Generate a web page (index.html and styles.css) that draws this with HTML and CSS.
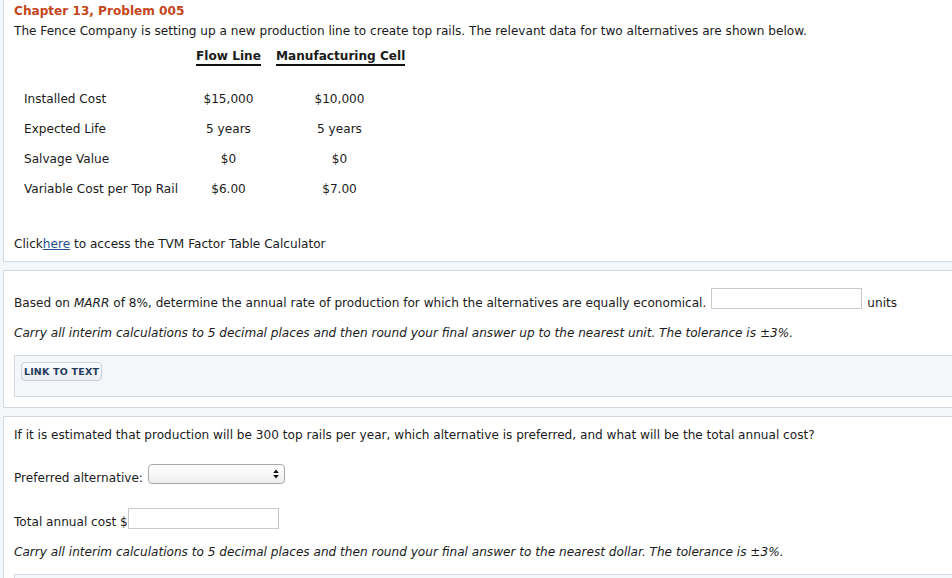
FILE: index.html
```html
<!DOCTYPE html>
<html>
<head>
<meta charset="utf-8">
<link rel="stylesheet" href="styles.css">
</head>
<body>
<div class="page">
  <section class="panel panel-intro">
    <h1 class="title">Chapter 13, Problem 005</h1>
    <p class="line intro">The Fence Company is setting up a new production line to create top rails. The relevant data for two alternatives are shown below.</p>
    <div class="data">
      <div class="row head">
        <div class="label"></div>
        <div class="cell"><span class="hd">Flow Line</span></div>
        <div class="cell"><span class="hd">Manufacturing Cell</span></div>
      </div>
      <div class="row">
        <div class="label">Installed Cost</div>
        <div class="cell">$15,000</div>
        <div class="cell">$10,000</div>
      </div>
      <div class="row">
        <div class="label">Expected Life</div>
        <div class="cell">5 years</div>
        <div class="cell">5 years</div>
      </div>
      <div class="row">
        <div class="label">Salvage Value</div>
        <div class="cell">$0</div>
        <div class="cell">$0</div>
      </div>
      <div class="row">
        <div class="label">Variable Cost per Top Rail</div>
        <div class="cell">$6.00</div>
        <div class="cell">$7.00</div>
      </div>
    </div>
    <p class="line click">Click<a href="#" class="link">here</a> to access the TVM Factor Table Calculator</p>
  </section>

  <section class="panel panel-q1">
    <div class="field-row first">
      <span class="field-text">Based on <i>MARR</i> of 8%, determine the annual rate of production for which the alternatives are equally economical.</span>
      <span class="input input-units"></span>
      <span class="field-text units">units</span>
    </div>
    <p class="line note note1">Carry all interim calculations to 5 decimal places and then round your final answer up to the nearest unit. The tolerance is ±3%.</p>
    <div class="toolbox">
      <span class="btn">LINK TO TEXT</span>
    </div>
  </section>

  <section class="panel panel-q2">
    <p class="line q2">If it is estimated that production will be 300 top rails per year, which alternative is preferred, and what will be the total annual cost?</p>
    <div class="field-row pref">
      <span class="field-text">Preferred alternative:</span>
      <span class="select">
        <svg class="arrows" width="6" height="10" viewBox="0 0 6 10"><path d="M3 0.5 L5.8 4 L0.2 4 Z M3 9.5 L5.8 6 L0.2 6 Z" fill="#111"/></svg>
      </span>
    </div>
    <div class="field-row total">
      <span class="field-text">Total annual cost $</span>
      <span class="input input-cost"></span>
    </div>
    <p class="line note note2">Carry all interim calculations to 5 decimal places and then round your final answer to the nearest dollar. The tolerance is ±3%.</p>
    <div class="toolbox"></div>
  </section>
</div>
</body>
</html>
```

FILE: styles.css
```css
html, body {
  margin: 0;
  padding: 0;
  overflow: hidden;
}
body {
  background: #f4f7fa;
  font-family: "DejaVu Sans", Verdana, sans-serif;
  font-size: 12.1px;
  color: #1b1b1b;
  width: 952px;
  height: 578px;
}
.page {
  padding-left: 3px;
  display: flex;
  flex-direction: column;
  gap: 8px;
}
.panel {
  background: #fff;
  border-left: 1px solid #d3d9e3;
  border-bottom: 1px solid #d3d9e3;
  padding-left: 10px;
}
.panel-q1, .panel-q2 {
  border-top: 1px solid #d3d9e3;
}
.line {
  margin: 0;
  line-height: 16px;
}
.title {
  margin: 0;
  padding-top: 3px;
  font-size: 12.1px;
  line-height: 16px;
  font-weight: bold;
  color: #c4461c;
}
.intro {
  margin-top: 4px;
}
.data {
  margin-top: 9px;
}
.row {
  display: grid;
  grid-template-columns: 157px 65px 127px;
  column-gap: 15px;
  padding-left: 10px;
  line-height: 16px;
  padding-top: 7px;
  padding-bottom: 7px;
}
.row.head {
  padding-top: 0;
  padding-bottom: 0;
  margin-bottom: 18px;
  font-weight: bold;
}
.hd {
  display: inline-block;
  border-bottom: 2px solid #111;
  white-space: nowrap;
}
.cell {
  text-align: center;
  white-space: nowrap;
}
.label {
  white-space: nowrap;
}
.click {
  margin-top: 32px;
  padding-bottom: 9px;
}
.link {
  color: #24508c;
  text-decoration: underline;
}
.field-row {
  display: flex;
  align-items: flex-start;
  height: 21px;
}
.field-text {
  line-height: 16px;
  margin-top: 7px;
  white-space: nowrap;
}
.first {
  margin-top: 17px;
}
.input {
  display: block;
  box-sizing: border-box;
  width: 151px;
  height: 21px;
  border: 1px solid #c9c9c9;
  background: #fff;
}
.input-units {
  margin-left: 5px;
}
.units {
  margin-left: 5px;
}
.note {
  font-style: italic;
}
.note1 {
  margin-top: 16px;
}
.note2 {
  margin-top: 15px;
}
.toolbox {
  margin-top: 14px;
  background: #f4f7fa;
  border: 1px solid #d3d9e3;
  border-right: none;
  padding: 6px 0 0 6px;
  box-sizing: border-box;
  height: 42px;
}
.panel-q1 .toolbox {
  margin-bottom: 10px;
}
.btn {
  display: inline-flex;
  align-items: center;
  justify-content: center;
  box-sizing: border-box;
  width: 81px;
  height: 19px;
  border: 1px solid #c8cfd9;
  border-radius: 4px;
  background: linear-gradient(#fbfcfd, #e9edf2);
  color: #263a5e;
  font-size: 9.5px;
  font-weight: bold;
  letter-spacing: 0.2px;
}
.q2 {
  margin-top: 10px;
}
.pref {
  margin-top: 21px;
  height: 20px;
}
.pref .field-text, .total .field-text {
  margin-top: 6px;
}
.select {
  display: flex;
  justify-content: flex-end;
  align-items: center;
  box-sizing: border-box;
  width: 137px;
  height: 20px;
  margin-left: 5px;
  border: 1px solid #a8a8a8;
  border-radius: 4px;
  background: linear-gradient(#ffffff, #eeeeee);
  padding-right: 5px;
}
.total {
  margin-top: 24px;
}
.input-cost {
  width: 151px;
  height: 21px;
}
.panel-q2 .toolbox {
  height: 20px;
}
```
